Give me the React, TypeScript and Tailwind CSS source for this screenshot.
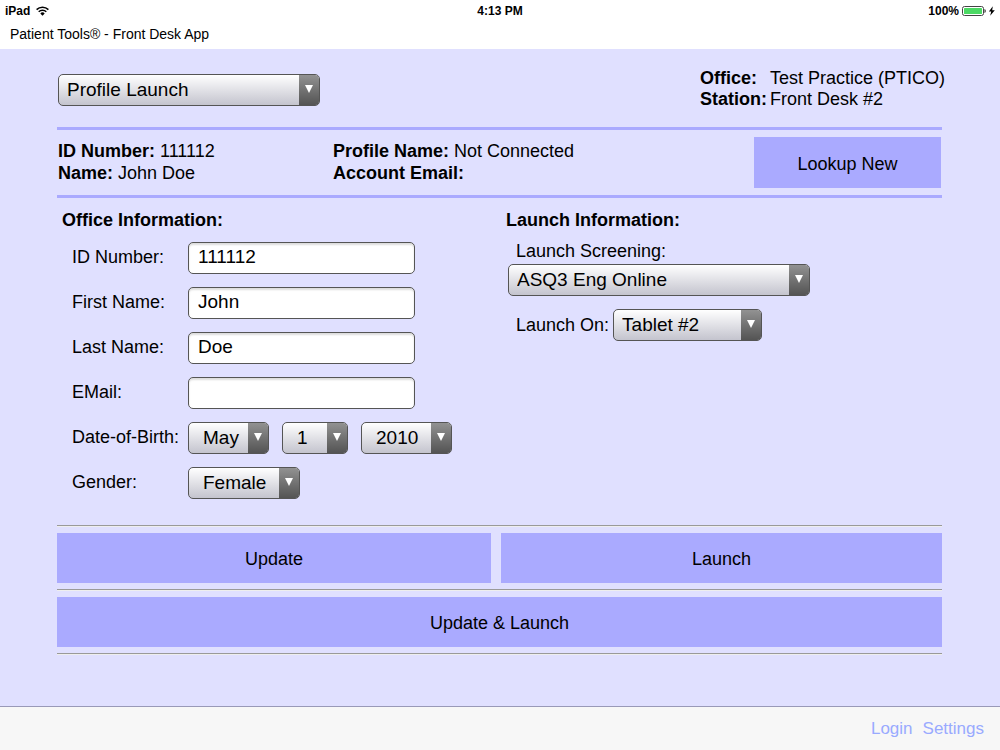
import { useState } from 'react'
import clsx from 'clsx'

interface SelectProps {
  id: string
  options: string[]
  label?: string
  className?: string
  indent?: boolean
}

function Select({ id, options, label, className, indent }: SelectProps) {
  const [value, setValue] = useState(options[0])

  return (
    <div
      className={clsx(
        'relative h-8 overflow-hidden rounded-[5px] border border-[#555555] bg-linear-to-b from-white to-[#c4c4ce]',
        className,
      )}
    >
      <select
        id={id}
        aria-label={label}
        value={value}
        onChange={(e) => setValue(e.target.value)}
        className={clsx(
          'block h-full w-full appearance-none bg-transparent pr-5 text-[19px] leading-[30px] text-black outline-none',
          indent ? 'pl-[14px]' : 'pl-2',
        )}
      >
        {options.map((option) => (
          <option key={option}>{option}</option>
        ))}
      </select>
      <span className="pointer-events-none absolute inset-y-0 right-0 flex w-5 justify-center bg-linear-to-b from-[#929292] to-[#545454] pt-[10px]">
        <svg width="8" height="8" viewBox="0 0 8 8" aria-hidden="true">
          <path d="M0 0h8L4 8z" fill="#fff" />
        </svg>
      </span>
    </div>
  )
}

interface FieldProps {
  id: string
  label: string
  value?: string
}

const fieldLabel = 'w-[116px] shrink-0 pb-[2px]'

function TextField({ id, label, value = '' }: FieldProps) {
  return (
    <div className="flex h-8 items-center">
      <label htmlFor={id} className={fieldLabel}>
        {label}
      </label>
      <input
        id={id}
        type="text"
        defaultValue={value}
        className="h-8 w-[227px] rounded-[5px] border border-[#555555] bg-white px-[9px] pb-[3px] text-[19px] text-black shadow-[inset_0_2px_2px_#dddddd] outline-none"
      />
    </div>
  )
}

function Divider() {
  return <hr className="h-[2px] border-t border-b border-t-[#9a9a9a] border-b-[#eeeeee]" />
}

function StatusBar() {
  return (
    <div className="grid h-[22px] grid-cols-3 items-center pr-[5px] pl-[5px] text-[12px] leading-[22px] font-bold">
      <div className="flex items-center gap-[6px]">
        <span>iPad</span>
        <svg width="13" height="10" viewBox="0 0 13 10" fill="none" stroke="#000" strokeWidth="1.5" aria-hidden="true">
          <path d="M0.6 3.6a8.4 8.4 0 0 1 11.8 0M2.7 5.8a5.4 5.4 0 0 1 7.6 0" />
          <path d="M4.3 7.4a3.1 3.1 0 0 1 4.4 0L6.5 9.8z" fill="#000" stroke="none" />
        </svg>
      </div>
      <span className="text-center">4:13 PM</span>
      <div className="flex items-center justify-end gap-[3px]">
        <span>100%</span>
        <svg width="33" height="10" viewBox="0 0 33 10" aria-hidden="true">
          <rect x="0.5" y="0.5" width="21" height="9" rx="2" fill="#fff" stroke="#444" />
          <rect x="2" y="2" width="18" height="6" rx="0.5" fill="#4cd964" />
          <path d="M22.5 3c1.6.4 1.6 3.6 0 4z" fill="#222" />
          <path d="M30.8 0.3 26.9 5.6h2.3L28.2 9.8l4.6-5.6h-2.6z" fill="#000" />
        </svg>
      </div>
    </div>
  )
}

const actionButton = 'bg-[#aaaaff] pt-[2px] text-center text-black hover:bg-[#9999ff]'

export default function App() {
  return (
    <div className="flex min-h-screen flex-col bg-[#e0e0ff] font-['Liberation_Sans',Arial,sans-serif] text-[18px] leading-[22px] text-black">
      <header className="bg-white pb-[3px]">
        <StatusBar />
        <h1 className="pl-[10px] text-[14px] leading-6">Patient Tools® - Front Desk App</h1>
      </header>

      <main className="flex-1 pt-[19px] pr-[58px] pl-[57px]">
        <div className="flex items-center justify-between pb-[15px] pl-px">
          <Select
            id="mode"
            label="Mode"
            options={['Profile Launch', 'Office Launch']}
            className="w-[262px]"
          />
          <dl className="grid w-[242px] grid-cols-[70px_auto] pb-[2px] leading-[21px] whitespace-nowrap">
            <dt className="font-bold">Office:</dt>
            <dd>Test Practice (PTICO)</dd>
            <dt className="font-bold">Station:</dt>
            <dd>Front Desk #2</dd>
          </dl>
        </div>

        <section className="flex items-center border-y-[3px] border-[#aaaaff] px-px py-[7px]">
          <div className="w-[275px] pb-[2px]">
            <p>
              <b>ID Number:</b> 111112
            </p>
            <p>
              <b>Name:</b> John Doe
            </p>
          </div>
          <div className="flex-1 pb-[2px]">
            <p>
              <b>Profile Name:</b> Not Connected
            </p>
            <p>
              <b>Account Email:</b>
            </p>
          </div>
          <button type="button" className={clsx(actionButton, 'h-[51px] w-[187px]')}>
            Lookup New
          </button>
        </section>

        <form onSubmit={(e) => e.preventDefault()}>
          <div className="grid grid-cols-[434fr_441fr] gap-[10px] pt-[11px] pb-[26px]">
            <section className="pl-[5px]">
              <h2 className="font-bold">Office Information:</h2>
              <div className="flex flex-col gap-[13px] pt-[11px] pl-[10px]">
                <TextField id="id-number" label="ID Number:" value="111112" />
                <TextField id="first-name" label="First Name:" value="John" />
                <TextField id="last-name" label="Last Name:" value="Doe" />
                <TextField id="email" label="EMail:" />
                <div className="flex h-8 items-center">
                  <label htmlFor="dob-month" className={fieldLabel}>
                    Date-of-Birth:
                  </label>
                  <div className="flex gap-[13px]">
                    <Select id="dob-month" options={['May', 'June', 'July']} className="w-[81px]" indent />
                    <Select id="dob-day" label="Day" options={['1', '2', '3']} className="w-[66px]" indent />
                    <Select id="dob-year" label="Year" options={['2010', '2011', '2012']} className="w-[91px]" indent />
                  </div>
                </div>
                <div className="flex h-8 items-center">
                  <label htmlFor="gender" className={fieldLabel}>
                    Gender:
                  </label>
                  <Select id="gender" options={['Female', 'Male']} className="w-[112px]" indent />
                </div>
              </div>
            </section>

            <section className="pl-[5px]">
              <h2 className="font-bold">Launch Information:</h2>
              <div className="pt-[9px] pl-[2px]">
                <label htmlFor="screening" className="block pb-[2px] pl-2">
                  Launch Screening:
                </label>
                <Select id="screening" options={['ASQ3 Eng Online', 'ASQ:SE Eng Online']} className="w-[302px]" />
                <div className="flex items-center gap-1 pt-[13px] pl-2">
                  <label htmlFor="launch-on">Launch On:</label>
                  <Select id="launch-on" options={['Tablet #2', 'Tablet #1']} className="w-[149px]" />
                </div>
              </div>
            </section>
          </div>

          <div className="flex flex-col gap-[6px]">
            <Divider />
            <div className="grid grid-cols-[434fr_441fr] gap-[10px]">
              <button type="submit" className={clsx(actionButton, 'h-[50px]')}>
                Update
              </button>
              <button type="button" className={clsx(actionButton, 'h-[50px]')}>
                Launch
              </button>
            </div>
            <Divider />
            <button type="button" className={clsx(actionButton, 'h-[50px]')}>
              Update &amp; Launch
            </button>
            <Divider />
          </div>
        </form>
      </main>

      <footer className="flex h-11 items-center justify-end gap-[10px] border-t border-[#9999b8] bg-[#f7f7f7] px-4 text-[17px] text-[#99aaff]">
        <a href="#login">Login</a>
        <a href="#settings">Settings</a>
      </footer>
    </div>
  )
}
